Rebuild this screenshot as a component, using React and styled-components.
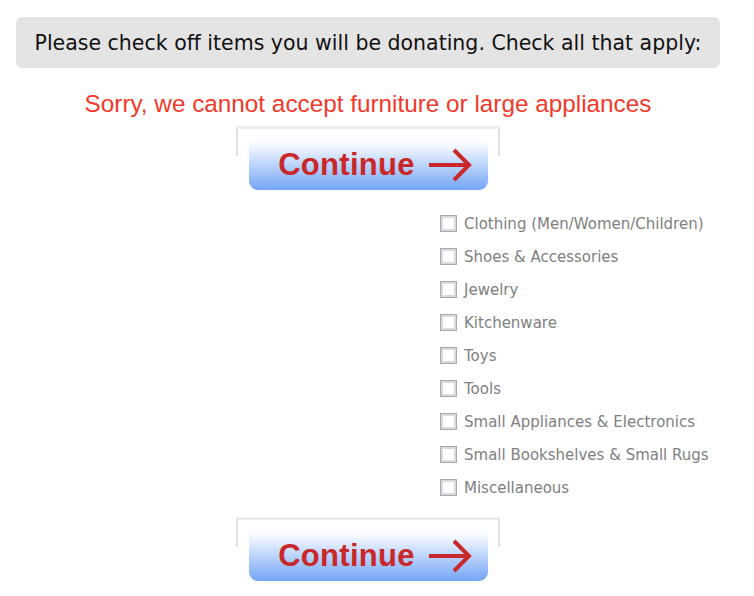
import styled, { createGlobalStyle } from "styled-components";

const GlobalStyle = createGlobalStyle`
  body {
    margin: 0;
    background: #ffffff;
    font-family: "DejaVu Sans", Verdana, sans-serif;
  }
`;

const Page = styled.div`
  width: 704px;
  margin-left: 16px;
  padding-top: 17px;
  display: flex;
  flex-direction: column;
  align-items: center;
`;

const Header = styled.div`
  width: 100%;
  height: 51px;
  box-sizing: border-box;
  background: #e5e4e5;
  border-radius: 6px;
  display: flex;
  align-items: center;
  justify-content: center;
  font-family: "DejaVu Sans", Verdana, sans-serif;
  font-size: 20.5px;
  color: #111;
  white-space: nowrap;
`;

const Warning = styled.p`
  margin: 22px 0 0;
  font-family: "Liberation Sans", Arial, sans-serif;
  font-size: 24.3px;
  line-height: 28px;
  color: #f2392b;
  white-space: nowrap;
`;

const ButtonWrap = styled.div`
  display: grid;
  width: 264px;
  height: 64px;
  margin-top: ${(p) => p.$top}px;
  cursor: pointer;
`;

const Frame = styled.div`
  grid-area: 1 / 1;
  height: 27px;
  border-top: 3px solid #ebebf0;
  border-left: 2px solid #e0e0e6;
  border-right: 2px solid #e0e0e6;
`;

const Button = styled.div`
  grid-area: 1 / 1;
  align-self: end;
  justify-self: center;
  width: 239px;
  height: 54px;
  border-radius: 9px;
  background: linear-gradient(to bottom, #ffffff 0%, #f4f8ff 18%, #b9d2fb 55%, #74a5f5 100%);
  display: flex;
  align-items: center;
  justify-content: center;
  gap: 13px;
  padding: 4px 0 0 14px;
  box-sizing: border-box;
`;

const ButtonLabel = styled.span`
  font-family: "Liberation Sans", Arial, sans-serif;
  font-weight: bold;
  font-size: 31px;
  letter-spacing: 0.3px;
  color: #c9282a;
`;

const List = styled.ul`
  list-style: none;
  margin: 17px 0 0;
  padding: 0 0 0 424px;
  align-self: stretch;
`;

const Row = styled.li`
  height: 33px;
  display: flex;
  align-items: center;
  gap: 7px;
`;

const Box = styled.input`
  appearance: none;
  margin: 0;
  width: 17px;
  height: 17px;
  flex: none;
  border: 1px solid #a8a8b0;
  box-shadow: inset 0 0 0 2px #d9d9de;
  background: #fff;
  cursor: pointer;
  &:checked {
    background: #7aa7f3;
  }
`;

const Label = styled.label`
  font-family: "DejaVu Sans", Verdana, sans-serif;
  font-size: 15px;
  color: #808080;
  white-space: nowrap;
`;

const Arrow = () => (
  <svg width="44" height="36" viewBox="0 0 44 36">
    <path d="M1 18 H40" stroke="#c9282a" strokeWidth="4" fill="none" />
    <path d="M26 3 L41 18 L26 33" stroke="#c9282a" strokeWidth="4" fill="none" />
  </svg>
);

const ContinueButton = ({ top }) => (
  <ButtonWrap $top={top}>
    <Frame />
    <Button>
      <ButtonLabel>Continue</ButtonLabel>
      <Arrow />
    </Button>
  </ButtonWrap>
);

const items = [
  "Clothing (Men/Women/Children)",
  "Shoes & Accessories",
  "Jewelry",
  "Kitchenware",
  "Toys",
  "Tools",
  "Small Appliances & Electronics",
  "Small Bookshelves & Small Rugs",
  "Miscellaneous",
];

export default function App() {
  return (
    <>
      <GlobalStyle />
      <Page>
        <Header>Please check off items you will be donating. Check all that apply:</Header>
        <Warning>Sorry, we cannot accept furniture or large appliances</Warning>
        <ContinueButton top={8} />
        <List>
          {items.map((item, i) => (
            <Row key={item}>
              <Box type="checkbox" id={`item-${i}`} />
              <Label htmlFor={`item-${i}`}>{item}</Label>
            </Row>
          ))}
        </List>
        <ContinueButton top={13} />
      </Page>
    </>
  );
}
